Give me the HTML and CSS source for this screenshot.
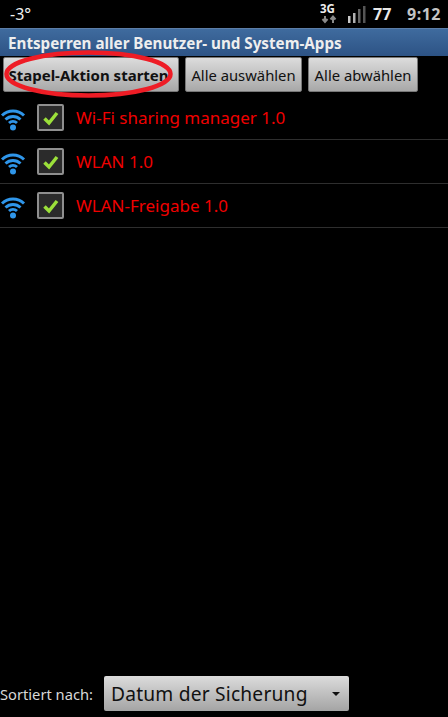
FILE: index.html
```html
<!DOCTYPE html>
<html lang="de">
<head>
<meta charset="utf-8">
<title>Entsperren</title>
<link rel="stylesheet" href="styles.css">
</head>
<body>
<div class="screen">
  <header class="status">
    <span class="temp">-3°</span>
    <div class="status-right">
      <svg class="net" width="20" height="28" viewBox="0 0 20 28">
        <text x="0" y="13" class="net-text">3G</text>
        <path d="M5 16v5M2.500 19l2.500 3 2.500-3M13 23v-6M10.500 19.500l2.500-3 2.500 3" stroke="#8a8a8a" stroke-width="2" fill="none"/>
      </svg>
      <svg class="signal" width="18" height="17" viewBox="0 0 18 17">
        <rect x="0" y="10" width="2.500" height="7" fill="#c8c8c8"/>
        <rect x="5" y="7" width="2.500" height="10" fill="#b0b0b0"/>
        <rect x="10" y="3" width="2.500" height="14" fill="#666"/>
        <rect x="15" y="0" width="2.500" height="17" fill="#555"/>
      </svg>
      <span class="battery">77</span>
      <span class="clock">9:12</span>
    </div>
  </header>
  <h1 class="title">Entsperren aller Benutzer- und System-Apps</h1>
  <div class="actions">
    <button class="btn btn-start">Stapel-Aktion starten</button>
    <button class="btn btn-all">Alle auswählen</button>
    <button class="btn btn-none">Alle abwählen</button>
    <svg class="ring" width="180" height="52" viewBox="0 0 180 52">
      <ellipse cx="88.500" cy="26" rx="82" ry="21.500" fill="none" stroke="#ee1c25" stroke-width="4.500"/>
    </svg>
  </div>
  <ul class="list">
    <li class="row">
      <svg class="wifi" width="26" height="26" viewBox="0 0 26 26">
        <path d="M2 10.500a16 16 0 0 1 22 0M5.500 14.500a11 11 0 0 1 15 0M9 18a6 6 0 0 1 8 0" fill="none" stroke="#2f96ea" stroke-width="3"/>
        <circle cx="13" cy="22.500" r="3" fill="#2f96ea"/>
      </svg>
      <span class="check"><svg width="18" height="16" viewBox="0 0 18 16"><path d="M2.500 8.500l4.500 4.500 8-10" fill="none" stroke="#9be03a" stroke-width="3.500"/></svg></span>
      <span class="name">Wi-Fi sharing manager 1.0</span>
    </li>
    <li class="row">
      <svg class="wifi" width="26" height="26" viewBox="0 0 26 26">
        <path d="M2 10.500a16 16 0 0 1 22 0M5.500 14.500a11 11 0 0 1 15 0M9 18a6 6 0 0 1 8 0" fill="none" stroke="#2f96ea" stroke-width="3"/>
        <circle cx="13" cy="22.500" r="3" fill="#2f96ea"/>
      </svg>
      <span class="check"><svg width="18" height="16" viewBox="0 0 18 16"><path d="M2.500 8.500l4.500 4.500 8-10" fill="none" stroke="#9be03a" stroke-width="3.500"/></svg></span>
      <span class="name">WLAN 1.0</span>
    </li>
    <li class="row">
      <svg class="wifi" width="26" height="26" viewBox="0 0 26 26">
        <path d="M2 10.500a16 16 0 0 1 22 0M5.500 14.500a11 11 0 0 1 15 0M9 18a6 6 0 0 1 8 0" fill="none" stroke="#2f96ea" stroke-width="3"/>
        <circle cx="13" cy="22.500" r="3" fill="#2f96ea"/>
      </svg>
      <span class="check"><svg width="18" height="16" viewBox="0 0 18 16"><path d="M2.500 8.500l4.500 4.500 8-10" fill="none" stroke="#9be03a" stroke-width="3.500"/></svg></span>
      <span class="name">WLAN-Freigabe 1.0</span>
    </li>
  </ul>
  <footer class="sort">
    <span class="sort-label">Sortiert nach:</span>
    <div class="spinner">
      <span class="spinner-text">Datum der Sicherung</span>
      <span class="caret"></span>
    </div>
  </footer>
</div>
</body>
</html>
```
FILE: styles.css
```css
* { box-sizing: border-box; }
html, body { margin: 0; padding: 0; background: #000; }
.screen {
  width: 448px;
  height: 717px;
  display: flex;
  flex-direction: column;
  background: #000;
  font-family: "Noto Sans", "Open Sans", sans-serif;
  overflow: hidden;
}
.status {
  height: 28px;
  flex: none;
  display: flex;
  justify-content: space-between;
  align-items: center;
  padding: 0 7px 0 10px;
  color: #e6e6e6;
}
.temp { font-size: 16px; color: #f0f0f0; }
.status-right { display: flex; align-items: center; }
.net { margin-right: 8px; }
.net-text { font: bold 11.500px "Noto Sans", sans-serif; fill: #eee; }
.signal { margin-right: 7px; }
.battery { font-size: 16px; font-weight: 700; color: #e8e8e8; width: 34px; }
.clock { font-size: 16px; font-weight: 700; color: #c4c4c4; letter-spacing: .5px; }
.title {
  margin: 0;
  height: 28px;
  flex: none;
  padding-left: 8px;
  font-size: 15.200px;
  font-weight: 700;
  line-height: 28px;
  color: #eee;
  white-space: nowrap;
  background: linear-gradient(#3f6b9e, #2d5385);
  border-top: 1px solid #5c7ea8;
}
.actions {
  position: relative;
  height: 35px;
  margin-top: 1px;
  flex: none;
  display: flex;
  gap: 6px;
  padding-left: 3px;
}
.btn {
  height: 35px;
  padding: 0;
  font-family: inherit;
  font-size: 14.800px;
  color: #111;
  background: linear-gradient(#dcdcdc, #a8a8a8);
  border: 1px solid #777;
  border-radius: 2px;
  white-space: nowrap;
}
.btn-start { width: 176px; padding-right: 5px; font-weight: 700; font-size: 15px; }
.btn-all { width: 117px; }
.btn-none { width: 110px; }
.ring { position: absolute; left: 0; top: -9px; }
.list { list-style: none; margin: 4px 0 0; padding: 0; }
.row {
  height: 44px;
  display: flex;
  align-items: center;
  border-bottom: 1px solid #2e2e2e;
}
.wifi { margin-left: 0; flex: none; }
.check {
  width: 27px;
  height: 27px;
  margin-left: 11px;
  flex: none;
  display: flex;
  align-items: center;
  justify-content: center;
  background: #2b2b2b;
  border: 2px solid #8f8f8f;
  border-radius: 2px;
}
.name { margin-left: 12px; font-size: 17px; color: #f00000; }
.sort {
  margin-top: auto;
  height: 41px;
  padding-bottom: 6px;
  flex: none;
  display: flex;
  align-items: center;
}
.sort-label { width: 104px; font-size: 14.700px; color: #d8d8d8; white-space: nowrap; }
.spinner {
  width: 245px;
  height: 35px;
  display: flex;
  align-items: center;
  justify-content: space-between;
  padding: 0 9px 0 7px;
  background: linear-gradient(#dcdcdc, #a4a4a4);
  border-radius: 2px;
}
.spinner-text { font-size: 19.200px; color: #111; white-space: nowrap; letter-spacing: .2px; }
.caret {
  width: 0;
  height: 0;
  border-left: 4px solid transparent;
  border-right: 4px solid transparent;
  border-top: 4px solid #111;
}
```
